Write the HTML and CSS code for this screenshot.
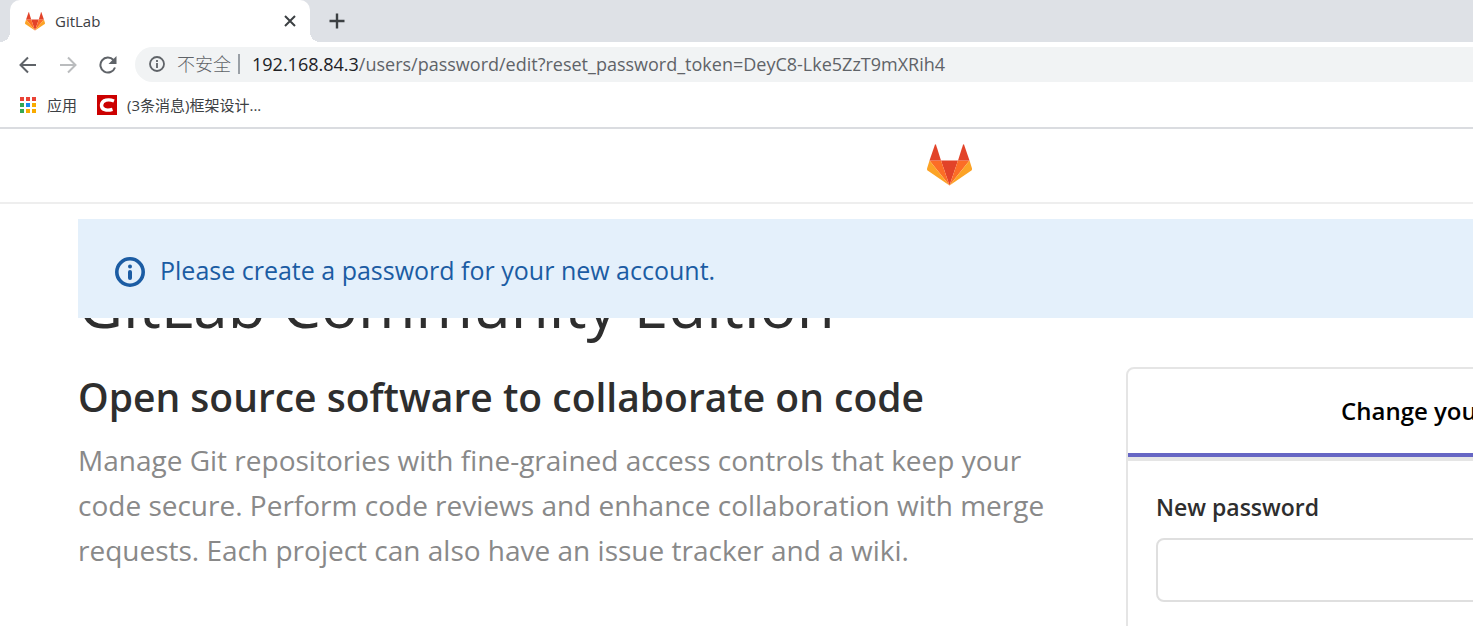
FILE: index.html
```html
<!DOCTYPE html>
<html lang="en">
<head>
<meta charset="utf-8">
<title>GitLab</title>
<link rel="stylesheet" href="styles.css">
</head>
<body>
<svg class="defs" aria-hidden="true">
  <symbol id="tanuki" viewBox="0 0 45 42">
    <path fill="#e24329" d="M22.500 41.500 14 16.500h17z"/>
    <path fill="#fc6d26" d="M22.500 41.500 14 16.500H2.500z"/>
    <path fill="#fca326" d="M2.500 16.500 0 24.500q-.3 1.200.6 1.900L22.500 41.500z"/>
    <path fill="#e24329" d="M2.500 16.500H14L9 .8q-.5-1.300-1.100 0z"/>
    <path fill="#fc6d26" d="M22.500 41.500 31 16.500h11.500z"/>
    <path fill="#fca326" d="m42.500 16.500 2.500 8q.3 1.200-.6 1.900L22.500 41.500z"/>
    <path fill="#e24329" d="M42.500 16.500H31L36 .8q.5-1.300 1.100 0z"/>
  </symbol>
</svg>
<div class="screen">
  <header class="browser">
    <div class="tabs">
      <div class="tab">
        <svg class="favicon"><use href="#tanuki"/></svg>
        <span class="tab-title">GitLab</span>
        <button class="icon-button" aria-label="Close tab"><svg width="12" height="12" viewBox="0 0 12 12"><path d="m1 1 10 10M11 1 1 11" stroke="#3c4043" stroke-width="2"/></svg></button>
      </div>
      <button class="icon-button new-tab" aria-label="New tab"><svg width="16" height="16" viewBox="0 0 16 16"><path d="M8 .5v15M.5 8h15" stroke="#3c4043" stroke-width="2.400"/></svg></button>
    </div>
    <div class="toolbar">
      <button class="icon-button" aria-label="Back"><svg width="18" height="18" viewBox="0 0 18 18"><path d="M17 9H2M9 1.500 1.500 9 9 16.500" fill="none" stroke="#5f6368" stroke-width="2"/></svg></button>
      <button class="icon-button" aria-label="Forward"><svg width="18" height="18" viewBox="0 0 18 18"><path d="M1 9h15M9 1.500 16.500 9 9 16.500" fill="none" stroke="#babcbe" stroke-width="2"/></svg></button>
      <button class="icon-button" aria-label="Reload"><svg width="18" height="18" viewBox="0 0 18 18"><path d="M16 11.500A7.500 7.500 0 1 1 14.500 4" fill="none" stroke="#5f6368" stroke-width="2"/><path d="M17.500 0v8h-8z" fill="#5f6368"/></svg></button>
      <div class="omnibox">
        <svg class="site-info" width="16" height="16" viewBox="0 0 16 16"><circle cx="8" cy="8" r="7" fill="none" stroke="#5f6368" stroke-width="1.800"/><path d="M8 7v5M8 4v2" stroke="#5f6368" stroke-width="1.800"/></svg>
        <span class="insecure" lang="zh">不安全</span>
        <span class="url"><span class="host">192.168.84.3</span>/users/password/edit?reset_password_token=DeyC8-Lke5ZzT9mXRih4</span>
      </div>
    </div>
    <nav class="bookmarks" lang="zh">
      <a href="#" class="bookmark">
        <svg width="17" height="17" viewBox="0 0 17 17"><path fill="#ea4335" d="M0 0h4v4H0zM6 0h4v4H6zM12 0h4v4h-4z"/><path fill="#34a853" d="M0 6h4v4H0zM0 12h4v4H0z"/><path fill="#1a88f0" d="M6 6h4v4H6z"/><path fill="#f9ab00" d="M12 6h4v4h-4zM6 12h4v4H6zM12 12h4v4h-4z"/></svg>
        应用</a>
      <a href="#" class="bookmark">
        <svg width="20" height="20" viewBox="0 0 20 20"><path fill="#c00" d="M0 0h20v20H0z"/><path d="M17 6C12 4 5 4.500 4.500 10c-.3 5 5.500 6 11 4.300" fill="none" stroke="#fff" stroke-width="3.400"/></svg>
        (3条消息)框架设计...</a>
    </nav>
  </header>
  <div class="site-header"><svg class="logo" role="img" aria-label="GitLab"><use href="#tanuki"/></svg></div>
  <main class="content">
    <div class="alert" role="status">
      <svg width="30" height="30" viewBox="0 0 30 30"><circle cx="15" cy="15" r="13.200" fill="none" stroke="#1b5ca3" stroke-width="3.600"/><circle cx="15" cy="9.600" r="2" fill="#1b5ca3"/><path d="M15 15v6" stroke="#1b5ca3" stroke-width="4" stroke-linecap="round"/></svg>
      <p>Please create a password for your new account.</p>
    </div>
    <h1>GitLab Community Edition</h1>
    <div class="columns">
      <section class="intro">
        <h2>Open source software to collaborate on code</h2>
        <p>Manage Git repositories with fine-grained access controls that keep your code secure. Perform code reviews and enhance collaboration with merge requests. Each project can also have an issue tracker and a wiki.</p>
      </section>
      <form class="panel">
        <h3>Change your password</h3>
        <div class="fields">
          <label for="password">New password</label>
          <input id="password" type="password">
        </div>
      </form>
    </div>
  </main>
</div>
</body>
</html>
```
FILE: styles.css
```css
* { box-sizing: border-box; }
body {
  margin: 0;
  overflow: hidden;
  background: #fff;
  color: #2e2e2e;
  font-family: "Open Sans", "Noto Sans CJK SC", sans-serif;
}
h1, h2, h3, p { margin: 0; }
svg { display: block; flex: none; }
.defs { position: absolute; width: 0; height: 0; }

/* The page is wider than the visible window */
.screen { width: 129%; }

.browser { border-bottom: 2px solid #dadce0; font-size: 15px; color: #3c4043; }
.icon-button {
  display: grid;
  place-items: center;
  width: 20px;
  height: 20px;
  padding: 0;
  border: 0;
  background: none;
}
.tabs { display: flex; align-items: stretch; height: 42px; padding-left: 10px; background: #dee1e6; }
.tab {
  position: relative;
  display: flex;
  align-items: center;
  gap: 10px;
  width: 300px;
  padding: 0 10px 0 15px;
  border-radius: 10px 10px 0 0;
  background: #fff;
}
.tab::before, .tab::after {
  content: "";
  position: absolute;
  bottom: 0;
  width: 10px;
  height: 10px;
}
.tab::before { right: 100%; background: radial-gradient(circle at 0 0, #dee1e6 10px, #fff 10px); }
.tab::after { left: 100%; background: radial-gradient(circle at 100% 0, #dee1e6 10px, #fff 10px); }
.favicon { width: 20px; height: 19px; }
.tab-title { flex: 1; font-size: 15px; }
.new-tab { align-self: center; margin-left: 17px; }

.toolbar { display: flex; align-items: center; gap: 20px; height: 45px; padding-left: 18px; }
.omnibox {
  display: flex;
  align-items: center;
  flex: 1;
  height: 35px;
  margin-left: -3px;
  padding: 0 0 1px 14px;
  border-radius: 18px 0 0 18px;
  background: #f1f3f4;
  font-size: 18px;
  line-height: 20px;
  color: #5f6368;
}
.insecure { margin-left: 12px; padding-right: 7px; border-right: 2px solid #9aa0a6; font-weight: 300; }
.url { margin-left: 12px; white-space: nowrap; }
.host { color: #202124; }

.bookmarks { display: flex; align-items: center; gap: 20px; height: 40px; padding: 0 20px 4px; }
.bookmark { display: flex; align-items: center; gap: 10px; color: #3c4043; text-decoration: none; line-height: 20px; }

.site-header { display: flex; justify-content: center; align-items: center; height: 75px; padding: 0 2px 2px 0; border-bottom: 2px solid #eee; }
.logo { width: 45px; height: 42px; }

.content { padding: 15px 80px 0 78px; }
.alert {
  position: relative;
  z-index: 1;
  display: flex;
  align-items: center;
  gap: 15px;
  padding: 33px 37px 27px;
  background: #e4f0fb;
  color: #1b5ca3;
  font-size: 25px;
  line-height: 39px;
}
.alert p { padding-bottom: 3px; line-height: 36px; }
h1 { margin-top: -54px; font-size: 62px; font-weight: 400; line-height: 80px; }
.columns { display: grid; grid-template-columns: minmax(0, 99fr) minmax(0, 69fr); gap: 52px; margin-top: 23px; }
.intro h2 { margin-top: 2px; font-size: 39px; font-weight: 600; line-height: 56px; }
.intro p { margin-top: 13px; color: #898989; font-size: 28px; line-height: 45px; }
.panel { min-height: 320px; border: 2px solid #e5e5e5; border-radius: 8px; }
.panel h3 {
  padding: 20px 0;
  border-bottom: 4px solid #6666c4;
  box-shadow: 0 4px #e5e5e5;
  color: #000;
  font-size: 24px;
  font-weight: 600;
  line-height: 44px;
  text-align: center;
}
.fields { display: grid; gap: 15px; padding: 34px 28px; }
.fields label { font-size: 23px; font-weight: 600; line-height: 32px; }
.fields input { width: 100%; height: 64px; border: 2px solid #dfdfdf; border-radius: 8px; background: #fff; }
```
